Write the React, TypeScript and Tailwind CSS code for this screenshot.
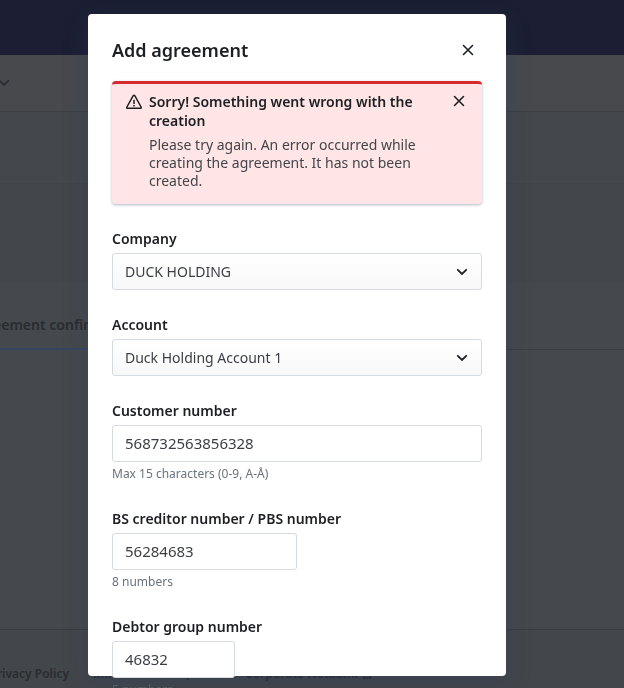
import { useId } from "react";
import type { ReactNode } from "react";

type FieldProps = {
  label: string;
  hint?: string;
  hintClass?: string;
  children: (id: string, hintId?: string) => ReactNode;
};

const inputClass =
  "block h-[37px] rounded-[3px] border border-[#d5dbe0] bg-white px-3 pb-[2px] text-[15px] text-[#3b3f44] outline-none focus:border-[#2c9cd9]";

function Field({ label, hint, hintClass = "text-[#68737d]", children }: FieldProps) {
  const id = useId();
  const hintId = hint ? `${id}-hint` : undefined;
  return (
    <div>
      <label htmlFor={id} className="mb-1 block text-[14px] leading-5 font-semibold">
        {label}
      </label>
      {children(id, hintId)}
      {hint && (
        <p id={hintId} className={`mt-[2px] text-[12px] leading-5 ${hintClass}`}>
          {hint}
        </p>
      )}
    </div>
  );
}

function Cross() {
  return (
    <svg viewBox="0 0 12 12" className="size-3" fill="none" stroke="currentColor" strokeWidth="1.6" strokeLinecap="round" aria-hidden="true">
      <path d="M1.500 1.500 10.500 10.500M10.500 1.500 1.500 10.500" />
    </svg>
  );
}

function Chevron({ className }: { className: string }) {
  return (
    <svg viewBox="0 0 12 8" className={className} fill="none" stroke="currentColor" strokeWidth="1.8" strokeLinecap="round" strokeLinejoin="miter" aria-hidden="true">
      <path d="M1.800 1.800 6 6l4.200-4.200" />
    </svg>
  );
}

function SelectField({ label, value }: { label: string; value: string }) {
  return (
    <Field label={label}>
      {(id) => (
        <div className="relative">
          <select
            id={id}
            defaultValue={value}
            className="block h-[37px] w-full appearance-none rounded-[3px] border border-[#d5dbe0] bg-linear-to-b from-white to-[#f8f8f8] pr-9 pl-3 text-[14px] text-[#3b3f44] outline-none"
          >
            <option>{value}</option>
          </select>
          <Chevron className="pointer-events-none absolute top-[15px] right-[14px] h-2 w-3" />
        </div>
      )}
    </Field>
  );
}

function Backdrop() {
  return (
    <div className="flex h-screen flex-col bg-[#45484c] text-[14px] font-semibold text-[#292c30]" aria-hidden="true">
      <div className="h-[55px] shrink-0 bg-[#1c1f33]" />
      <div className="flex h-[57px] shrink-0 items-center border-b border-[#3b3f43] bg-[#47494d]">
        <Chevron className="-ml-[2px] h-2 w-3" />
      </div>
      <div className="h-[72px] shrink-0 border-b border-[#414448] bg-[#44474b]" />
      <div className="h-[99px] shrink-0 bg-[#43464a]" />
      <div className="flex h-[67px] shrink-0 border-b border-[#3b3f43]">
        <div className="-mb-px flex w-[138px] items-center justify-end overflow-hidden border-b-2 border-[#34465f] pt-[18px] whitespace-nowrap">
          <span className="leading-5">Agreement confirmation</span>
        </div>
      </div>
      <div className="grow" />
      <div className="flex h-[59px] shrink-0 items-end gap-6 border-t border-[#393c41] bg-[#43464a] pb-1 text-[12px] whitespace-nowrap">
        <div className="flex w-[69px] shrink-0 justify-end leading-5">Privacy Policy</div>
        <div className="w-[128px] shrink-0 leading-5">Mifid II and/or Quotes</div>
        <div className="flex items-center gap-1 leading-5">
          Corporate Netbank
          <svg viewBox="0 0 10 10" className="size-[10px]" fill="none" stroke="currentColor" strokeWidth="1.3">
            <path d="M4 2H1.500v7H8.500V6M6 1h3v3M9 1 5 5" />
          </svg>
        </div>
      </div>
    </div>
  );
}

export default function App() {
  return (
    <div className="h-screen overflow-hidden font-['Noto_Sans','Open_Sans',sans-serif] text-[#1c1f24]">
      <Backdrop />
      <div className="fixed inset-0 flex justify-center overflow-hidden pt-[14px] pr-[30px] pb-3">
        <section
          role="dialog"
          aria-modal="true"
          aria-labelledby="dialog-title"
          className="h-full w-full max-w-[418px] rounded-[4px] bg-white px-6 shadow-[0_8px_24px_rgba(40,60,100,0.3)]"
        >
          <header className="flex h-[67px] items-center justify-between pt-1">
            <h1 id="dialog-title" className="text-[18px] leading-6 font-semibold">
              Add agreement
            </h1>
            <button type="button" aria-label="Close dialog" className="mr-2">
              <Cross />
            </button>
          </header>

          <div role="alert" className="mb-[25px] flex rounded-[4px] border-t-3 border-[#d52b2f] bg-[#ffe5e6] px-[14px] pt-2 pb-[14px] shadow-[0_1px_3px_rgba(30,60,90,0.35)]">
            <svg viewBox="0 0 16 16" className="mt-[2px] mr-[7px] size-4 shrink-0" fill="none" stroke="currentColor" strokeWidth="1.5" strokeLinejoin="round" aria-hidden="true">
              <path d="M7.100 1.900.9 13q-.5 1.300.9 1.300h12.400q1.400 0 .9-1.300L8.900 1.900q-.9-1.200-1.800 0Z" />
              <path d="M8 5.800v4.200M8 11v1.500" />
            </svg>
            <div className="min-w-0 grow">
              <h2 className="max-w-[280px] text-[14px] leading-[19px] font-semibold">
                Sorry! Something went wrong with the creation
              </h2>
              <p className="mt-[6px] max-w-[280px] text-[14px] leading-[18px] text-[#42464b]">
                Please try again. An error occurred while creating the agreement. It has not been created.
              </p>
            </div>
            <button type="button" aria-label="Dismiss message" className="mt-[3px] mr-[3px] self-start">
              <Cross />
            </button>
          </div>

          <form className="flex flex-col gap-[25px]">
            <SelectField label="Company" value="DUCK HOLDING" />
            <SelectField label="Account" value="Duck Holding Account 1" />
            <Field label="Customer number" hint="Max 15 characters (0-9, A-Å)">
              {(id, hintId) => (
                <input id={id} aria-describedby={hintId} defaultValue="568732563856328" maxLength={15} className={`w-full ${inputClass}`} />
              )}
            </Field>
            <Field label="BS creditor number / PBS number" hint="8 numbers">
              {(id, hintId) => (
                <input id={id} aria-describedby={hintId} defaultValue="56284683" className={`w-1/2 ${inputClass}`} />
              )}
            </Field>
            <Field label="Debtor group number" hint="5 numbers" hintClass="text-[#56616c]">
              {(id, hintId) => (
                <input id={id} aria-describedby={hintId} defaultValue="46832" className={`w-1/3 ${inputClass}`} />
              )}
            </Field>
          </form>
        </section>
      </div>
    </div>
  );
}
